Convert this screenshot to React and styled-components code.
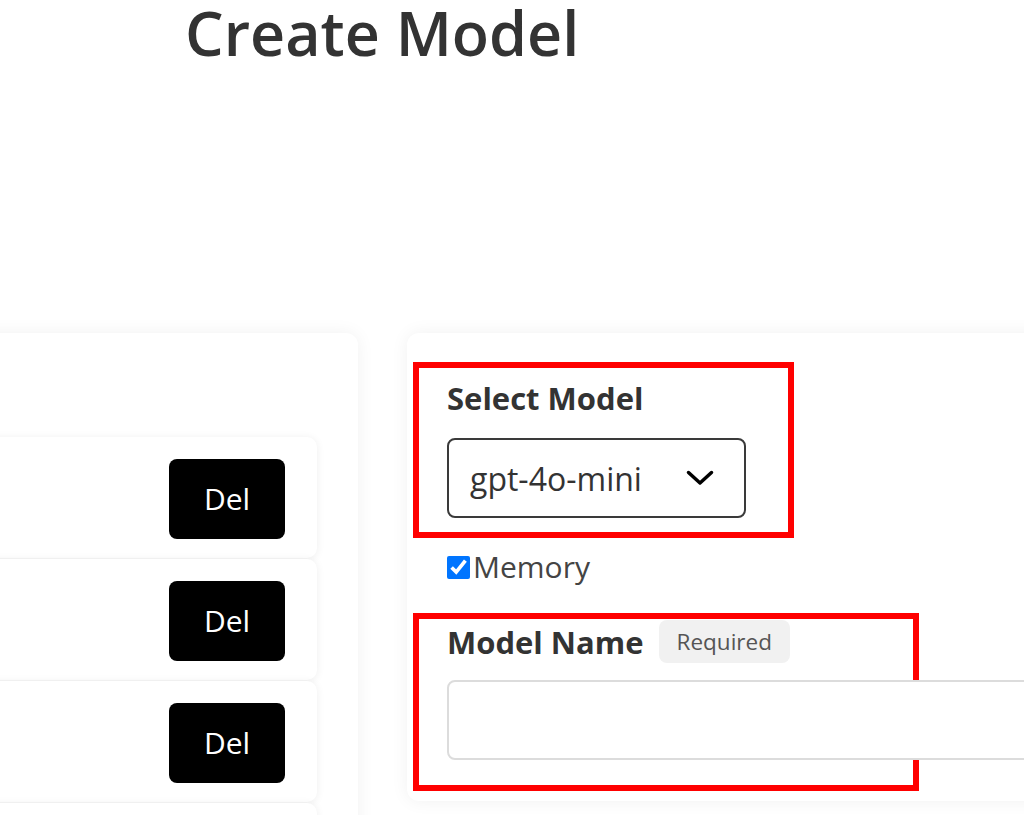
import React from "react"
import styled, { createGlobalStyle } from "styled-components"

const GlobalStyle = createGlobalStyle`
  * { box-sizing: border-box; }
  body {
    margin: 0;
    background: #fff;
    font-family: "Open Sans", "Noto Sans", sans-serif;
    color: #333;
    overflow: hidden;
  }
`

const Page = styled.div`
  width: 1024px;
  height: 815px;
  overflow: hidden;
`

const Title = styled.h1`
  margin: 0 0 0 185px;
  font-size: 61px;
  line-height: 66px;
  font-weight: 600;
  color: #333;
`

const Columns = styled.div`
  display: flex;
  align-items: flex-start;
  gap: 49px;
  margin: 267px 0 0 -150px;
`

const Card = styled.div`
  flex: none;
  width: ${({ $width }) => $width}px;
  background: #fff;
  border-radius: 12px;
  box-shadow: 0 0 18px rgba(0, 0, 0, 0.06);
`

const ListCard = styled(Card)`
  padding: 104px 41px 0 0;
  min-height: 600px;
`

const FormCard = styled(Card)`
  padding: 29px 0 10px 6px;
`

const List = styled.div`
  display: flex;
  flex-direction: column;
  gap: 1px;
`

const Item = styled.div`
  height: 121px;
  display: flex;
  align-items: center;
  justify-content: flex-end;
  padding: 0 32px 0 0;
  background: #fff;
  border-radius: 10px;
  box-shadow: 0 1px 8px rgba(0, 0, 0, 0.07);
`

const DelButton = styled.button`
  width: 116px;
  height: 80px;
  margin-top: 2px;
  border: none;
  border-radius: 8px;
  background: #000;
  color: #fff;
  font-family: inherit;
  font-size: 30px;
`

const Marked = styled.div`
  width: ${({ $width }) => $width}px;
  margin-top: ${({ $top }) => $top || 0}px;
  border: 6px solid #ff0000;
  padding: ${({ $pad }) => $pad};
`

const Label = styled.div`
  font-size: 31px;
  font-weight: 700;
  line-height: 36px;
  color: #333;
`

const Select = styled.div`
  margin-top: 22px;
  width: 299px;
  height: 80px;
  border: 2px solid #3a3a3a;
  border-radius: 8px;
  display: flex;
  align-items: center;
  justify-content: space-between;
  padding: 0 30px 0 21px;
  font-size: 32px;
  color: #333;
`

const CheckRow = styled.label`
  display: flex;
  align-items: center;
  gap: 3px;
  margin: 14px 0 0 34px;
  height: 30px;
  font-size: 30px;
  line-height: 1;
  color: #444;
`

const Check = styled.input`
  width: 23px;
  height: 23px;
  margin: 0;
  accent-color: #0075ff;
`

const LabelRow = styled.div`
  display: flex;
  align-items: center;
  gap: 15px;
`

const Badge = styled.span`
  height: 43px;
  display: inline-flex;
  align-items: center;
  padding: 0 18px;
  border-radius: 8px;
  background: #f1f1f1;
  color: #555;
  font-size: 22.5px;
`

const TextInput = styled.input`
  display: block;
  margin-top: 17px;
  width: 680px;
  height: 80px;
  border: 2px solid #dcdcdc;
  border-radius: 8px;
  font-family: inherit;
  font-size: 28px;
`

const Chevron = () => (
  <svg width='28' height='16' viewBox='0 0 28 16' fill='none'>
    <polyline points='2.5,2.5 14,13 25.5,2.5' stroke='#000' strokeWidth='3.5' strokeLinecap='round' strokeLinejoin='round' />
  </svg>
)

const items = [1, 2, 3, 4, 5]

const App = () => {
  return (
    <Page>
      <GlobalStyle />
      <Title>Create Model</Title>
      <Columns>
        <ListCard $width={508}>
          <List>
            {items.map((id) => (
              <Item key={id}>
                <DelButton>Del</DelButton>
              </Item>
            ))}
          </List>
        </ListCard>
        <FormCard $width={700}>
          <Marked $width={381} $pad='12px 0 14px 28px'>
            <Label>Select Model</Label>
            <Select>
              <span>gpt-4o-mini</span>
              <Chevron />
            </Select>
          </Marked>
          <CheckRow>
            <Check type='checkbox' defaultChecked />
            Memory
          </CheckRow>
          <Marked $width={506} $top={31} $pad='1px 0 25px 28px'>
            <LabelRow>
              <Label>Model Name</Label>
              <Badge>Required</Badge>
            </LabelRow>
            <TextInput type='text' />
          </Marked>
        </FormCard>
      </Columns>
    </Page>
  )
}

export default App
